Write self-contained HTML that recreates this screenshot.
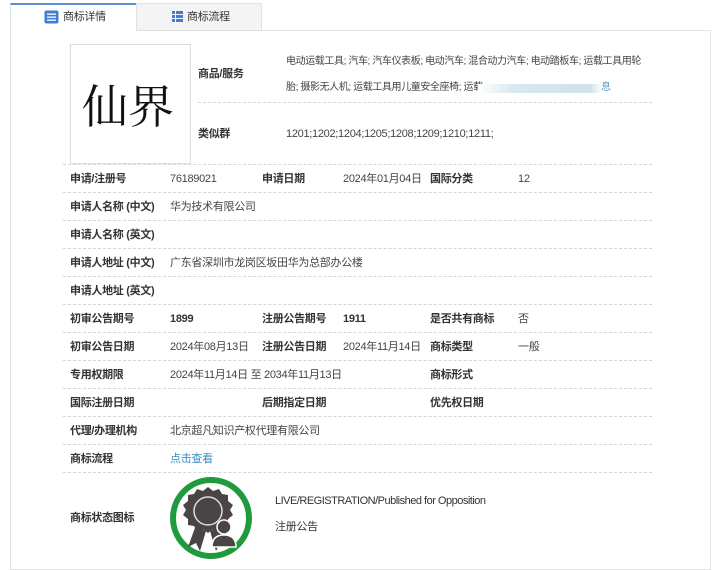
<!DOCTYPE html>
<html><head><meta charset="utf-8"><style>
*{margin:0;padding:0;box-sizing:border-box}
body{width:719px;height:559px;background:#fff;position:relative;overflow:hidden;font-family:"Liberation Sans","Noto Sans CJK SC",sans-serif;font-size:11px;color:#444;letter-spacing:-0.3px}
.a{position:absolute;white-space:nowrap;line-height:14px}
.b{font-weight:bold;color:#333}
.l{position:absolute;left:63px;width:589px;border-top:1px dashed #d6d6d6;height:0}
</style></head><body>
<div style="position:absolute;left:10px;top:30px;width:701px;height:540px;border:1px solid #e2e2e2"></div>
<div style="position:absolute;left:10px;top:3px;width:126px;height:28px;background:#fff;border-top:2px solid #5b8fd0;border-left:1px solid #e2e2e2"></div>
<div style="position:absolute;left:136px;top:3px;width:126px;height:27px;background:#f4f4f4;border:1px solid #e2e2e2;border-bottom:none"></div>
<svg style="position:absolute;left:44px;top:10px" width="15" height="14"><rect x="0.5" y="0.5" width="14" height="13" rx="2" fill="#3f7fd0"/><rect x="3" y="3.5" width="9" height="1.3" fill="#fff"/><rect x="3" y="6.5" width="9" height="1.3" fill="#fff"/><rect x="3" y="9.5" width="9" height="1.3" fill="#fff"/></svg>
<div class="a" style="left:63px;top:10px;color:#333">商标详情</div>
<svg style="position:absolute;left:172px;top:11px" width="11" height="11"><g fill="#3f7fd0"><rect x="0" y="0" width="3" height="3"/><rect x="4" y="0" width="7" height="3"/><rect x="0" y="4" width="3" height="3"/><rect x="4" y="4" width="7" height="3"/><rect x="0" y="8" width="3" height="3"/><rect x="4" y="8" width="7" height="3"/></g></svg>
<div class="a" style="left:187px;top:10px;color:#333">商标流程</div>
<div style="position:absolute;left:70px;top:44px;width:121px;height:120px;border:1px solid #ddd;background:#fff"></div>
<div class="a" style="left:82px;top:78px;font-size:46px;line-height:52px;color:#111;font-family:'Noto Serif CJK SC',serif;letter-spacing:0">仙界</div>
<div class="a b" style="left:198px;top:67px">商品/服务</div>
<div class="a" style="left:286px;top:55px;font-size:10px;letter-spacing:-0.4px">电动运载工具; 汽车; 汽车仪表板; 电动汽车; 混合动力汽车; 电动踏板车; 运载工具用轮</div>
<div class="a" style="left:286px;top:81px;font-size:10px;letter-spacing:-0.4px">胎; 摄影无人机; 运载工具用儿童安全座椅; 运载</div>
<div style="position:absolute;left:478px;top:84px;width:124px;height:9px;background:linear-gradient(90deg,#fff,#d8e8ee 30%,#cfe3e9 90%,#fff)"></div>
<div class="a" style="left:601px;top:81px;color:#5aa0c8;font-size:10px">息</div>
<div style="position:absolute;left:198px;top:102px;width:454px;border-top:1px dashed #d6d6d6"></div>
<div class="a b" style="left:198px;top:127px">类似群</div>
<div class="a" style="left:286px;top:127px">1201;1202;1204;1205;1208;1209;1210;1211;</div>
<div class="l" style="top:164px"></div>
<div class="a b" style="left:70px;top:172px">申请/注册号</div><div class="a" style="left:170px;top:172px">76189021</div>
<div class="a b" style="left:262px;top:172px">申请日期</div><div class="a" style="left:343px;top:172px">2024年01月04日</div>
<div class="a b" style="left:430px;top:172px">国际分类</div><div class="a" style="left:518px;top:172px">12</div>
<div class="l" style="top:192px"></div>
<div class="a b" style="left:70px;top:200px">申请人名称 (中文)</div><div class="a" style="left:170px;top:200px">华为技术有限公司</div>
<div class="l" style="top:220px"></div>
<div class="a b" style="left:70px;top:228px">申请人名称 (英文)</div>
<div class="l" style="top:248px"></div>
<div class="a b" style="left:70px;top:256px">申请人地址 (中文)</div><div class="a" style="left:170px;top:256px">广东省深圳市龙岗区坂田华为总部办公楼</div>
<div class="l" style="top:276px"></div>
<div class="a b" style="left:70px;top:284px">申请人地址 (英文)</div>
<div class="l" style="top:304px"></div>
<div class="a b" style="left:70px;top:312px">初审公告期号</div><div class="a b" style="left:170px;top:312px">1899</div>
<div class="a b" style="left:262px;top:312px">注册公告期号</div><div class="a b" style="left:343px;top:312px">1911</div>
<div class="a b" style="left:430px;top:312px">是否共有商标</div><div class="a" style="left:518px;top:312px">否</div>
<div class="l" style="top:332px"></div>
<div class="a b" style="left:70px;top:340px">初审公告日期</div><div class="a" style="left:170px;top:340px">2024年08月13日</div>
<div class="a b" style="left:262px;top:340px">注册公告日期</div><div class="a" style="left:343px;top:340px">2024年11月14日</div>
<div class="a b" style="left:430px;top:340px">商标类型</div><div class="a" style="left:518px;top:340px">一般</div>
<div class="l" style="top:360px"></div>
<div class="a b" style="left:70px;top:368px">专用权期限</div><div class="a" style="left:170px;top:368px">2024年11月14日 至 2034年11月13日</div>
<div class="a b" style="left:430px;top:368px">商标形式</div>
<div class="l" style="top:388px"></div>
<div class="a b" style="left:70px;top:396px">国际注册日期</div>
<div class="a b" style="left:262px;top:396px">后期指定日期</div>
<div class="a b" style="left:430px;top:396px">优先权日期</div>
<div class="l" style="top:416px"></div>
<div class="a b" style="left:70px;top:424px">代理/办理机构</div><div class="a" style="left:170px;top:424px">北京超凡知识产权代理有限公司</div>
<div class="l" style="top:444px"></div>
<div class="a b" style="left:70px;top:452px">商标流程</div><div class="a" style="left:170px;top:452px;color:#3a8fc0">点击查看</div>
<div class="l" style="top:472px"></div>
<div class="a b" style="left:70px;top:511px">商标状态图标</div>
<svg style="position:absolute;left:168px;top:475px" width="86" height="86" viewBox="0 0 86 86">
<circle cx="43" cy="43" r="38" fill="#fff" stroke="#1f9a3c" stroke-width="6"/>
<path d="M28 50 L20 72 L28 68 L32 76 L38 56 Z M52 50 L60 72 L52 68 L48 76 L42 56 Z" fill="#4a4444"/>
<path d="M40 12 l5 4 6-2 3 5 6 1 0 6 5 4-3 5 3 5-5 4 0 6-6 1-3 5-6-2-5 4-5-4-6 2-3-5-6-1 0-6-5-4 3-5-3-5 5-4 0-6 6-1 3-5 6 2z" fill="#4a4444"/>
<circle cx="40" cy="36" r="14" fill="none" stroke="#ddd" stroke-width="1.5"/>
<circle cx="56" cy="52" r="7" fill="#4a4444" stroke="#fff" stroke-width="1.5"/>
<path d="M44 72 q0-12 12-12 q12 0 12 12 z" fill="#4a4444" stroke="#fff" stroke-width="1.5"/>
</svg>
<div class="a" style="left:275px;top:494px;color:#333;letter-spacing:-0.5px">LIVE/REGISTRATION/Published for Opposition</div>
<div class="a" style="left:275px;top:520px;color:#333">注册公告</div>
</body></html>
